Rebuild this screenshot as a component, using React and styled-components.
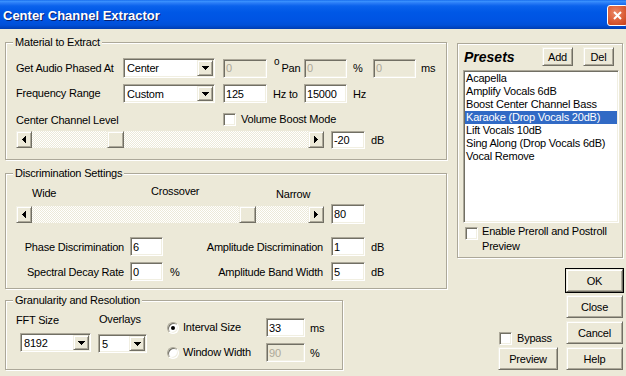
import styled, { createGlobalStyle } from 'styled-components'

const GlobalStyle = createGlobalStyle`
  * { box-sizing: border-box; }
  html, body { margin: 0; padding: 0; background: #ece9d8; }
  body {
    font-family: "Liberation Sans", Arial, sans-serif;
    font-size: 11px;
    letter-spacing: -0.2px;
    color: #000;
  }
`

// classic 3d edges
const sunken = `
  border: 1px solid;
  border-color: #aca899 #fff #fff #aca899;
  box-shadow: inset 1px 1px 0 #716f64, inset -1px -1px 0 #f1efe2;
`
const raised = `
  border: 1px solid;
  border-color: #f1efe2 #716f64 #716f64 #f1efe2;
  box-shadow: inset 1px 1px 0 #fff, inset -1px -1px 0 #aca899;
  background: #ece9d8;
`

const presets = [
  'Acapella',
  'Amplify Vocals 6dB',
  'Boost Center Channel Bass',
  'Karaoke (Drop Vocals 20dB)',
  'Lift Vocals 10dB',
  'Sing Along (Drop Vocals 6dB)',
  'Vocal Remove',
]

const Arrow = ({ dir }) => {
  if (dir === 'down') {
    return (
      <svg width="7" height="4" shapeRendering="crispEdges">
        <rect x="0" y="0" width="7" height="1" />
        <rect x="1" y="1" width="5" height="1" />
        <rect x="2" y="2" width="3" height="1" />
        <rect x="3" y="3" width="1" height="1" />
      </svg>
    )
  }
  const cols = dir === 'left' ? [3, 2, 1, 0] : [0, 1, 2, 3]
  return (
    <svg width="4" height="7" shapeRendering="crispEdges">
      {cols.map((c, i) => (
        <rect key={i} x={i} y={c} width="1" height={7 - c * 2} />
      ))}
    </svg>
  )
}

const Combo = ({ w, h, value }) => (
  <ComboBox $w={w} $h={h}>
    <ComboText>{value}</ComboText>
    <DropBtn><Arrow dir="down" /></DropBtn>
  </ComboBox>
)

const Slider = ({ w, pos }) => (
  <Scroll $w={w}>
    <ScrollBtn><Arrow dir="left" /></ScrollBtn>
    <Track>
      <Thumb style={{ left: pos }} />
    </Track>
    <ScrollBtn><Arrow dir="right" /></ScrollBtn>
  </Scroll>
)

const App = () => {
  return (
    <Window>
      <GlobalStyle />
      <TitleBar>
        <TitleText>Center Channel Extractor</TitleText>
        <CloseBtn>
          <svg width="9" height="9">
            <path d="M1 1L8 8M8 1L1 8" stroke="#fff" strokeWidth="2" />
          </svg>
        </CloseBtn>
      </TitleBar>

      <Client>
        <LeftCol>
          <Group $h={118} $pad="15px 0 0 10px">
            <Legend>Material to Extract</Legend>
            <Row $h={20}>
              <Label $w={107}>Get Audio Phased At</Label>
              <Combo w={92} value="Center" />
              <Edit $w={44} $ml={8} $disabled>0</Edit>
              <Unit $w={37}>
                <Degree>o</Degree>
                <span>Pan</span>
              </Unit>
              <Edit $w={43} $disabled>0</Edit>
              <Unit $w={26} $pl={6}>%</Unit>
              <Edit $w={43} $disabled>0</Edit>
              <Unit $pl={5}>ms</Unit>
            </Row>
            <Row $h={19} $mt={6}>
              <Label $w={107}>Frequency Range</Label>
              <Combo w={92} h={19} value="Custom" />
              <Edit $w={44} $ml={8}>125</Edit>
              <Unit $w={37} $pl={6}>Hz to</Unit>
              <Edit $w={43}>15000</Edit>
              <Unit $pl={6}>Hz</Unit>
            </Row>
            <Row $h={14} $mt={9}>
              <Label $w={207} $pt={3}>Center Channel Level</Label>
              <Check />
              <Label $ml={5}>Volume Boost Mode</Label>
            </Row>
            <Row $h={19} $mt={4}>
              <Slider w={308} pos={75} />
              <Edit $w={34} $ml={7} $h={18}>-20</Edit>
              <Unit $pl={6}>dB</Unit>
            </Row>
          </Group>

          <Group $h={116} $mt={13} $pad="11px 0 0 10px">
            <Legend>Discrimination Settings</Legend>
            <TickRow>
              <Tick $w={119} $mt={2}>Wide</Tick>
              <Tick $w={125}>Crossover</Tick>
              <Tick $mt={3}>Narrow</Tick>
            </TickRow>
            <Row $h={20} $mt={4}>
              <Slider w={308} pos={207} />
              <Edit $w={34} $ml={7} $h={20}>80</Edit>
            </Row>
            <Row $h={19} $mt={13}>
              <RLabel $w={114} $pr={6}>Phase Discrimination</RLabel>
              <Edit $w={33}>6</Edit>
              <Unit $w={20} />
              <RLabel $w={148} $pr={8}>Amplitude Discrimination</RLabel>
              <Edit $w={34}>1</Edit>
              <Unit $pl={6}>dB</Unit>
            </Row>
            <Row $h={19} $mt={6}>
              <RLabel $w={114} $pr={6}>Spectral Decay Rate</RLabel>
              <Edit $w={33}>0</Edit>
              <Unit $w={20} $pl={7}>%</Unit>
              <RLabel $w={148} $pr={8}>Amplitude Band Width</RLabel>
              <Edit $w={34}>5</Edit>
              <Unit $pl={6}>dB</Unit>
            </Row>
          </Group>

          <Group $h={70} $w={338} $mt={11} $flex>
            <Legend>Granularity and Resolution</Legend>
            <Column $w={92} $pad="13px 0 0 10px">
              <Label>FFT Size</Label>
              <ComboSlot $ml={4} $mt={6}>
                <Combo w={71} h={19} value="8192" />
              </ComboSlot>
            </Column>
            <Column $w={69} $pad="12px 0 0 0">
              <Label $ml={1}>Overlays</Label>
              <ComboSlot $mt={8}>
                <Combo w={49} h={19} value="5" />
              </ComboSlot>
            </Column>
            <Column $pad="17px 0 0 0">
              <Row $h={19}>
                <Radio $on />
                <Label $w={83} $ml={4}>Interval Size</Label>
                <Edit $w={39}>33</Edit>
                <Unit $pl={5}>ms</Unit>
              </Row>
              <Row $h={19} $mt={6}>
                <Radio />
                <Label $w={83} $ml={4}>Window Width</Label>
                <Edit $w={39} $disabled>90</Edit>
                <Unit $pl={5}>%</Unit>
              </Row>
            </Column>
          </Group>
        </LeftCol>

        <RightCol>
          <PresetPanel>
            <PresetHeader>
              <PresetTitle>Presets</PresetTitle>
              <Button $w={31} $h={19}>Add</Button>
              <Button $w={31} $h={19} $ml={10}>Del</Button>
            </PresetHeader>
            <ListBox>
              {presets.map((p) => (
                <ListItem key={p} $selected={p.startsWith('Karaoke')}>{p}</ListItem>
              ))}
            </ListBox>
            <CheckRow>
              <Check />
              <WrapLabel>Enable Preroll and Postroll Preview</WrapLabel>
            </CheckRow>
          </PresetPanel>

          <BottomArea>
            <PreviewStack>
              <BypassRow>
                <Check />
                <Label $ml={5}>Bypass</Label>
              </BypassRow>
              <Button $w={60}>Preview</Button>
            </PreviewStack>
            <ButtonStack>
              <Button $w={57} $default>OK</Button>
              <Button $w={57}>Close</Button>
              <Button $w={57}>Cancel</Button>
              <Button $w={57}>Help</Button>
            </ButtonStack>
          </BottomArea>
        </RightCol>
      </Client>
    </Window>
  )
}

const Window = styled.div`
  width: 626px;
  height: 376px;
  overflow: hidden;
  display: flex;
  flex-direction: column;
  background: #ece9d8;
`

const TitleBar = styled.div`
  height: 29px;
  flex: none;
  display: flex;
  align-items: flex-start;
  justify-content: space-between;
  padding-left: 3px;
  background: linear-gradient(
    to bottom,
    #0a5ee6 0,
    #3d95ff 1px,
    #2a7cf6 3px,
    #0a62ec 6px,
    #0058e6 12px,
    #0054e3 20px,
    #0050d8 25px,
    #0046c6 27px,
    #003db0 29px
  );
`

const TitleText = styled.span`
  font: 700 13px "Liberation Sans", Arial, sans-serif;
  letter-spacing: 0;
  color: #fff;
  line-height: 15px;
  margin-top: 8px;
  text-shadow: 1px 1px 0 #0a1f6b;
  white-space: nowrap;
`

const CloseBtn = styled.span`
  width: 21px;
  height: 21px;
  flex: none;
  margin: 5px -2px 0 0;
  border: 1px solid #fff;
  border-radius: 3px;
  background: radial-gradient(circle at 40% 35%, #ea8a6a 0, #e06842 40%, #c53b14 100%);
  display: flex;
  align-items: center;
  justify-content: center;
`

const Client = styled.div`
  flex: 1;
  display: flex;
  padding: 13px 0 0 5px;
`

const LeftCol = styled.div`
  width: 442px;
  flex: none;
  display: flex;
  flex-direction: column;
`

const Group = styled.div`
  position: relative;
  width: ${(p) => (p.$w ? `${p.$w}px` : 'auto')};
  height: ${(p) => p.$h}px;
  margin-top: ${(p) => p.$mt || 0}px;
  padding: ${(p) => p.$pad || 0};
  display: ${(p) => (p.$flex ? 'flex' : 'block')};
  border: 1px solid #aca899;
  box-shadow: inset 1px 1px 0 #fff, 1px 1px 0 #fff;
`

const Legend = styled.span`
  position: absolute;
  top: -7px;
  left: 7px;
  padding: 0 2px;
  line-height: 13px;
  background: #ece9d8;
  white-space: nowrap;
`

const Row = styled.div`
  display: flex;
  align-items: center;
  height: ${(p) => p.$h}px;
  margin-top: ${(p) => p.$mt || 0}px;
`

const Label = styled.span`
  flex: none;
  width: ${(p) => (p.$w ? `${p.$w}px` : 'auto')};
  margin-left: ${(p) => p.$ml || 0}px;
  padding-top: ${(p) => p.$pt || 0}px;
  line-height: 13px;
  white-space: nowrap;
`

const RLabel = styled.span`
  flex: none;
  width: ${(p) => p.$w}px;
  padding-right: ${(p) => p.$pr || 0}px;
  text-align: right;
  white-space: nowrap;
`

const Unit = styled.span`
  flex: none;
  display: flex;
  align-items: center;
  width: ${(p) => (p.$w ? `${p.$w}px` : 'auto')};
  padding-left: ${(p) => p.$pl || 0}px;
  white-space: nowrap;
`

const Degree = styled.span`
  font-size: 10px;
  line-height: 10px;
  margin: -12px 2px 0 7px;
`

const Edit = styled.div`
  ${sunken}
  flex: none;
  width: ${(p) => p.$w}px;
  height: ${(p) => p.$h || 19}px;
  margin-left: ${(p) => p.$ml || 0}px;
  padding: 0 2px;
  display: flex;
  align-items: center;
  background: ${(p) => (p.$disabled ? '#ece9d8' : '#fff')};
  color: ${(p) => (p.$disabled ? '#aca899' : '#000')};
  white-space: nowrap;
  overflow: hidden;
`

const ComboBox = styled.div`
  ${sunken}
  flex: none;
  width: ${(p) => p.$w}px;
  height: ${(p) => p.$h || 20}px;
  padding: 1px;
  display: flex;
  background: #fff;
`

const ComboText = styled.span`
  flex: 1;
  display: flex;
  align-items: center;
  padding-left: 2px;
  white-space: nowrap;
  overflow: hidden;
`

const DropBtn = styled.span`
  ${raised}
  width: 16px;
  flex: none;
  display: flex;
  align-items: center;
  justify-content: center;
`

const ComboSlot = styled.div`
  margin-left: ${(p) => p.$ml || 0}px;
  margin-top: ${(p) => p.$mt || 0}px;
`

const Scroll = styled.div`
  flex: none;
  display: flex;
  width: ${(p) => p.$w}px;
  height: 17px;
`

const ScrollBtn = styled.span`
  ${raised}
  width: 16px;
  flex: none;
  display: flex;
  align-items: center;
  justify-content: center;
`

const Track = styled.div`
  flex: 1;
  position: relative;
  background: repeating-conic-gradient(#fff 0 25%, #ece9d8 0 50%) 0 0 / 2px 2px;
`

const Thumb = styled.span`
  ${raised}
  position: absolute;
  top: 0;
  bottom: 0;
  width: 17px;
`

const TickRow = styled.div`
  display: flex;
  align-items: flex-start;
  height: 15px;
  padding-left: 16px;
`

const Tick = styled.span`
  flex: none;
  width: ${(p) => (p.$w ? `${p.$w}px` : 'auto')};
  margin-top: ${(p) => p.$mt || 0}px;
  line-height: 13px;
`

const Column = styled.div`
  flex: none;
  width: ${(p) => (p.$w ? `${p.$w}px` : 'auto')};
  padding: ${(p) => p.$pad || 0};
  display: flex;
  flex-direction: column;
  align-items: flex-start;
`

const Check = styled.span`
  ${sunken}
  flex: none;
  width: 13px;
  height: 13px;
  background: #fff;
`

const Radio = styled.span`
  flex: none;
  width: 12px;
  height: 12px;
  border-radius: 50%;
  border: 1px solid;
  border-color: #aca899 #fff #fff #aca899;
  box-shadow: inset 1px 1px 0 #716f64, inset -1px -1px 0 #f1efe2;
  background: #fff;
  display: flex;
  align-items: center;
  justify-content: center;

  &::after {
    content: '';
    width: 4px;
    height: 4px;
    border-radius: 50%;
    background: #000;
    display: ${(p) => (p.$on ? 'block' : 'none')};
  }
`

const Button = styled.div`
  ${raised}
  flex: none;
  width: ${(p) => p.$w}px;
  height: ${(p) => p.$h || 23}px;
  margin-left: ${(p) => p.$ml || 0}px;
  display: flex;
  align-items: center;
  justify-content: center;
  white-space: nowrap;
  ${(p) => p.$default && 'outline: 1px solid #000;'}
`

const RightCol = styled.div`
  width: 167px;
  flex: none;
  margin-left: 10px;
  display: flex;
  flex-direction: column;
`

const PresetPanel = styled.div`
  width: 166px;
  height: 215px;
  margin-top: 1px;
  padding: 2px 8px 0 5px;
  border: 1px solid #aca899;
  box-shadow: inset 1px 1px 0 #fff, 1px 1px 0 #fff;
`

const PresetHeader = styled.div`
  display: flex;
  align-items: center;
  height: 21px;
`

const PresetTitle = styled.span`
  flex: 1;
  margin-left: 1px;
  font-size: 14px;
  font-weight: 700;
  font-style: italic;
  letter-spacing: 0;
  line-height: 16px;
`

const ListBox = styled.div`
  ${sunken}
  width: 156px;
  height: 153px;
  margin-top: 3px;
  padding: 1px;
  background: #fff;
`

const ListItem = styled.div`
  height: 13px;
  line-height: 13px;
  padding-left: 1px;
  white-space: nowrap;
  background: ${(p) => (p.$selected ? '#316ac5' : 'transparent')};
  color: ${(p) => (p.$selected ? '#fff' : '#000')};
`

const CheckRow = styled.div`
  display: flex;
  align-items: flex-start;
  margin-top: 4px;
  padding-left: 2px;
`

const WrapLabel = styled.span`
  width: 136px;
  margin: -3px 0 0 4px;
  line-height: 15px;
`

const BottomArea = styled.div`
  display: flex;
  justify-content: flex-end;
  align-items: flex-end;
  gap: 8px;
  margin-top: 11px;
  padding-right: 1px;
`

const PreviewStack = styled.div`
  display: flex;
  flex-direction: column;
  align-items: flex-start;
`

const BypassRow = styled.div`
  display: flex;
  align-items: center;
  margin: 0 0 2px 1px;
`

const ButtonStack = styled.div`
  display: flex;
  flex-direction: column;
  gap: 3px;
`

export default App
